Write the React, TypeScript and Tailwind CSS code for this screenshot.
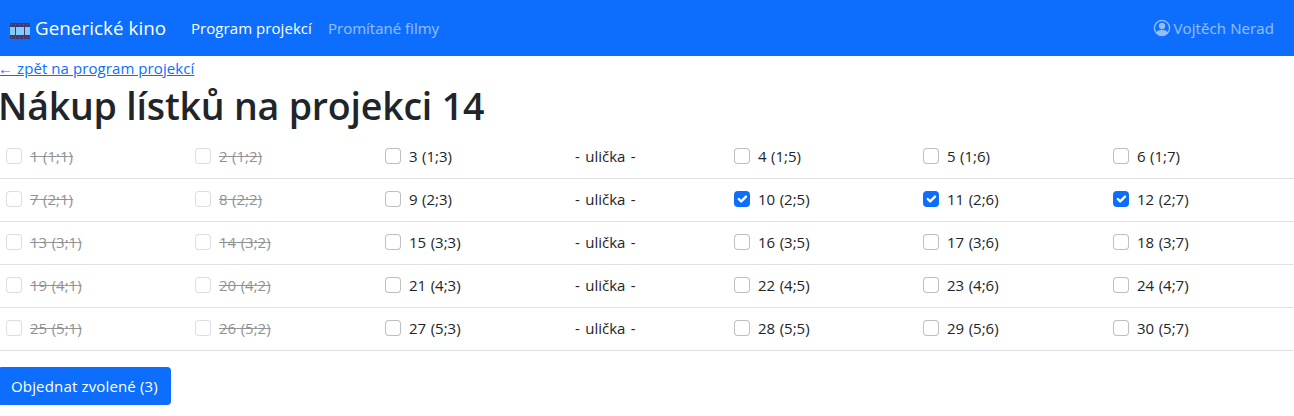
import { useState } from "react";

type Seat = { id: number; row: number; col: number };

const COLUMNS = [1, 2, 3, 5, 6, 7];
const ROWS: Seat[][] = [1, 2, 3, 4, 5].map((row) =>
  COLUMNS.map((col, i) => ({ id: (row - 1) * 6 + i + 1, row, col }))
);

function FilmIcon() {
  return (
    <svg className="mt-[5px] h-4 w-5 shrink-0" viewBox="0 0 20 16" shapeRendering="crispEdges" aria-hidden="true">
      <rect width="20" height="16" fill="#423a73" />
      <path fill="#83cbff" d="M0 4h5v8H0zM6 4h8v8H6zM15 4h5v8h-5z" />
      <path
        fill="#5a5ca0"
        d="M1 1h1v1H1zM5 1h1v1H5zM9 1h1v1H9zM13 1h1v1h-1zM17 1h1v1h-1zM1 14h1v1H1zM5 14h1v1H5zM9 14h1v1H9zM13 14h1v1h-1zM17 14h1v1h-1z"
      />
    </svg>
  );
}

function PersonIcon() {
  return (
    <svg className="h-4 w-4 shrink-0 overflow-visible" viewBox="0 0 16 16" fill="currentColor" stroke="currentColor" strokeWidth="0.3" aria-hidden="true">
      <path d="M11 6a3 3 0 1 1-6 0 3 3 0 0 1 6 0z" />
      <path
        fillRule="evenodd"
        d="M0 8a8 8 0 1 1 16 0A8 8 0 0 1 0 8zm8-7a7 7 0 0 0-5.468 11.37C3.242 11.226 4.805 10 8 10s4.757 1.225 5.468 2.37A7 7 0 0 0 8 1z"
      />
    </svg>
  );
}

function SeatBox({ seat, checked, onToggle }: { seat: Seat; checked: boolean; onToggle: () => void }) {
  const sold = seat.col < 3;
  return (
    <label className={sold ? "flex items-center gap-2 opacity-50" : "flex items-center gap-2"}>
      <input type="checkbox" className="sr-only" checked={checked} disabled={sold} onChange={onToggle} />
      <span
        className={
          checked
            ? "h-4 w-4 shrink-0 rounded-[4px] bg-[#0d6efd]"
            : "h-4 w-4 shrink-0 rounded-[4px] border border-black/25 bg-white"
        }
      >
        {checked && (
          <svg className="h-4 w-4" viewBox="0 0 20 20" fill="none" stroke="#fff" strokeWidth="3" strokeLinecap="round" strokeLinejoin="round" aria-hidden="true">
            <path d="m6 10 3 3 6-6" />
          </svg>
        )}
      </span>
      <span className={sold ? "[word-spacing:0.6px] line-through" : "[word-spacing:0.6px]"}>
        {seat.id} ({seat.row};{seat.col})
      </span>
    </label>
  );
}

export default function App() {
  const [chosen, setChosen] = useState<number[]>([10, 11, 12]);
  const toggle = (id: number) =>
    setChosen((list) => (list.includes(id) ? list.filter((n) => n !== id) : [...list, id]));

  return (
    <div className="h-[416px] overflow-hidden bg-white font-['Open_Sans','Noto_Sans',sans-serif] text-[15px] leading-6 text-[#212529]">
      <nav className="flex h-14 items-center bg-[#0d6efd] pr-5 pl-[10px] whitespace-nowrap">
        <a className="flex w-[180px] items-center gap-[5px] text-[18.75px] leading-[30px] text-white">
          <FilmIcon />
          <span className="tracking-[0.07px]">Generické kino</span>
        </a>
        <a className="w-[137px] pl-px tracking-[0.06px] text-white">Program projekcí</a>
        <a className="pl-px text-white/55">Promítané filmy</a>
        <a className="ml-auto flex items-center gap-1 text-white/55">
          <PersonIcon />
          <span className="tracking-[0.1px]">Vojtěch Nerad</span>
        </a>
      </nav>
      <main>
        <div className="h-6">
          <a className="-ml-[2px] tracking-[0.08px] text-[#0d6efd] underline">← zpět na program projekcí</a>
        </div>
        <h1 className="mb-2 -ml-[2px] h-12 text-[37.5px] leading-[52px] font-semibold tracking-[-0.2px] whitespace-nowrap">
          Nákup lístků na projekci 14
        </h1>
        <div>
          {ROWS.map((seats) => (
            <div
              key={seats[0].row}
              className="grid h-[43px] grid-cols-[189px_190px_189px_160px_189px_190px_1fr] items-center border-b border-[#dee2e6] pb-[2px] pl-[6px] whitespace-nowrap"
            >
              {seats.slice(0, 3).map((s) => (
                <SeatBox key={s.id} seat={s} checked={chosen.includes(s.id)} onToggle={() => toggle(s.id)} />
              ))}
              <span className="pl-px [word-spacing:1.5px]">- ulička -</span>
              {seats.slice(3).map((s) => (
                <SeatBox key={s.id} seat={s} checked={chosen.includes(s.id)} onToggle={() => toggle(s.id)} />
              ))}
            </div>
          ))}
        </div>
        <button className="mt-4 -ml-[2px] flex h-[38px] w-[173px] items-center rounded-[4px] bg-[#0d6efd] pl-[13px] tracking-[0.16px] whitespace-nowrap text-white">
          Objednat zvolené ({chosen.length})
        </button>
      </main>
    </div>
  );
}
